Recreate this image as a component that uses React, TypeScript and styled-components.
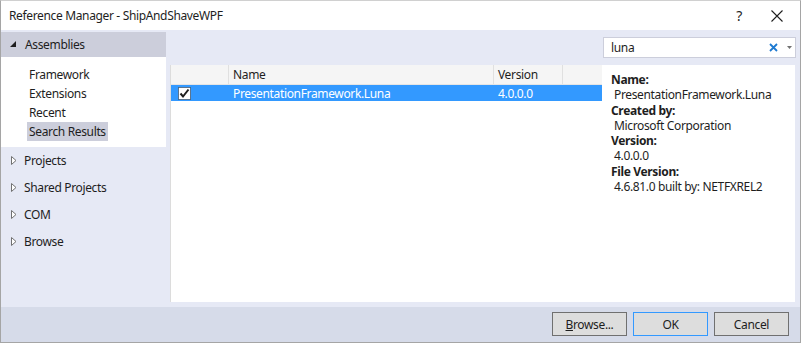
import React from "react";
import styled, { createGlobalStyle } from "styled-components";

const GlobalStyle = createGlobalStyle`
  html, body { margin: 0; padding: 0; background: #ffffff; }
  body { font-family: "Noto Sans", "Open Sans", sans-serif; font-size: 12px; letter-spacing: -0.35px; color: #1e1e1e; }
  * { box-sizing: border-box; }
`;

const Window = styled.div`
  width: 801px;
  height: 343px;
  display: flex;
  flex-direction: column;
  border: 1px solid #a5a5a5;
  border-top-color: #d0d0d0;
  background: #e6e9f5;
  overflow: hidden;
`;

const TitleBar = styled.div`
  height: 29px;
  flex: 0 0 auto;
  background: #ffffff;
  display: flex;
  align-items: center;
  padding-left: 8px;
`;

const Title = styled.div`
  flex: 1;
  font-size: 12px;
  color: #1e1e1e;
`;

const TitleButton = styled.div<{ $w: number }>`
  width: ${(p) => p.$w}px;
  height: 29px;
  display: flex;
  align-items: center;
  justify-content: center;
  color: #1e1e1e;
`;

const HelpGlyph = styled.span`
  font-size: 14px;
`;

const Main = styled.div`
  flex: 1;
  display: flex;
  padding-top: 2px;
  min-height: 0;
`;

const LeftPanel = styled.div`
  width: 165px;
  flex: 0 0 auto;
  display: flex;
  flex-direction: column;
`;

const GroupHeader = styled.div`
  height: 25px;
  background: #cccedb;
  display: flex;
  align-items: center;
  padding-left: 9px;
  gap: 8px;
`;

const SubList = styled.div`
  background: #ffffff;
  padding: 8px 0 6px 26px;
  display: flex;
  flex-direction: column;
  width: 165px;
`;

const SubItem = styled.div<{ $selected?: boolean }>`
  height: 19px;
  display: flex;
  align-items: center;
  align-self: flex-start;
  padding: 0 2px;
  background: ${(p) => (p.$selected ? "#cccedb" : "transparent")};
`;

const NavItem = styled.div`
  height: 27px;
  display: flex;
  align-items: center;
  padding-left: 10px;
  gap: 7px;
`;

const RightArea = styled.div`
  flex: 1;
  display: flex;
  flex-direction: column;
  padding: 5px 5px 5px 4px;
  min-width: 0;
`;

const SearchRow = styled.div`
  height: 21px;
  display: flex;
  justify-content: flex-end;
  margin-bottom: 7px;
`;

const SearchBox = styled.div`
  width: 193px;
  height: 21px;
  margin-right: -1px;
  background: #ffffff;
  border: 1px solid #cccedb;
  display: flex;
  align-items: center;
  padding-left: 7px;
`;

const SearchText = styled.div`
  flex: 1;
  color: #1e1e1e;
`;

const SearchClear = styled.div`
  width: 14px;
  display: flex;
  align-items: center;
  justify-content: center;
  margin-right: 4px;
`;

const SearchDrop = styled.div`
  width: 11px;
  display: flex;
  align-items: center;
  justify-content: center;
`;

const Content = styled.div`
  flex: 1;
  display: flex;
  min-height: 0;
`;

const Grid = styled.div`
  width: 432px;
  flex: 0 0 auto;
  background: #ffffff;
  border-left: 1px solid #dcdcdc;
  display: flex;
  flex-direction: column;
`;

const HeaderRow = styled.div`
  height: 20px;
  display: flex;
  background: #f5f5f5;
  border-bottom: 1px solid #e5e5e5;
`;

const HeaderCell = styled.div<{ $w: number }>`
  width: ${(p) => p.$w}px;
  flex: 0 0 auto;
  border-right: 1px solid #e0e0e0;
  display: flex;
  align-items: center;
  padding-left: 4px;
`;

const HeaderFill = styled.div`
  flex: 1;
`;

const DataRow = styled.div<{ $selected?: boolean }>`
  height: 16px;
  display: flex;
  background: ${(p) => (p.$selected ? "#3399ff" : "transparent")};
  color: ${(p) => (p.$selected ? "#ffffff" : "#1e1e1e")};
`;

const DataCell = styled.div<{ $w: number }>`
  width: ${(p) => p.$w}px;
  flex: 0 0 auto;
  display: flex;
  align-items: center;
  padding-left: 4px;
`;

const CheckCell = styled.div<{ $w: number }>`
  width: ${(p) => p.$w}px;
  flex: 0 0 auto;
  display: flex;
  align-items: center;
  padding-left: 7px;
`;

const Details = styled.div`
  flex: 1;
  background: #ffffff;
  padding: 7px 0 0 9px;
  display: flex;
  flex-direction: column;
`;

const DetailLabel = styled.div`
  font-weight: 700;
  line-height: 15.3px;
`;

const DetailValue = styled.div`
  line-height: 15.3px;
  padding-left: 3px;
`;

const BottomBar = styled.div`
  height: 35px;
  flex: 0 0 auto;
  background: #d6dbe9;
  display: flex;
  justify-content: flex-end;
  align-items: flex-start;
  padding: 5px 11px 0 0;
  gap: 6px;
`;

const Button = styled.div<{ $focused?: boolean }>`
  width: 75px;
  height: 24px;
  background: #dddddd;
  border: 1px solid ${(p) => (p.$focused ? "#3399ff" : "#707070")};
  display: flex;
  align-items: center;
  justify-content: center;
  color: #1e1e1e;
`;

const Underline = styled.span`
  text-decoration: underline;
`;

const ExpandedArrow = () => (
  <svg width="7" height="7" viewBox="0 0 7 7">
    <path d="M6 0 L6 6 L0 6 Z" fill="#1e1e1e" />
  </svg>
);

const CollapsedArrow = () => (
  <svg width="6" height="9" viewBox="0 0 6 9">
    <path d="M0.5 0.5 L5 4.5 L0.5 8.5 Z" fill="#ffffff" stroke="#717171" strokeWidth="1" />
  </svg>
);

const CheckBox = () => (
  <svg width="13" height="13" viewBox="0 0 13 13">
    <rect x="0.5" y="0.5" width="12" height="12" fill="#ffffff" stroke="#1e1e1e" strokeDasharray="1 1" />
    <path d="M2.5 6.5 L5 9.5 L10.5 2.5" fill="none" stroke="#1e1e1e" strokeWidth="2" />
  </svg>
);

const navItems = ["Projects", "Shared Projects", "COM", "Browse"];

export default function App() {
  return (
    <>
      <GlobalStyle />
      <Window>
        <TitleBar>
          <Title>Reference Manager - ShipAndShaveWPF</Title>
          <TitleButton $w={30}>
            <HelpGlyph>?</HelpGlyph>
          </TitleButton>
          <TitleButton $w={46}>
            <svg width="12" height="12" viewBox="0 0 12 12">
              <path d="M0.5 0.5 L11.5 11.5 M11.5 0.5 L0.5 11.5" stroke="#1e1e1e" strokeWidth="1.1" />
            </svg>
          </TitleButton>
        </TitleBar>
        <Main>
          <LeftPanel>
            <GroupHeader>
              <ExpandedArrow />
              <span>Assemblies</span>
            </GroupHeader>
            <SubList>
              <SubItem>Framework</SubItem>
              <SubItem>Extensions</SubItem>
              <SubItem>Recent</SubItem>
              <SubItem $selected>Search Results</SubItem>
            </SubList>
            {navItems.map((n) => (
              <NavItem key={n}>
                <CollapsedArrow />
                <span>{n}</span>
              </NavItem>
            ))}
          </LeftPanel>
          <RightArea>
            <SearchRow>
              <SearchBox>
                <SearchText>luna</SearchText>
                <SearchClear>
                  <svg width="9" height="9" viewBox="0 0 9 9">
                    <path d="M1 1 L8 8 M8 1 L1 8" stroke="#1e7ad1" strokeWidth="1.8" />
                  </svg>
                </SearchClear>
                <SearchDrop>
                  <svg width="5" height="3" viewBox="0 0 5 3">
                    <path d="M0 0 L5 0 L2.5 3 Z" fill="#717171" />
                  </svg>
                </SearchDrop>
              </SearchBox>
            </SearchRow>
            <Content>
              <Grid>
                <HeaderRow>
                  <HeaderCell $w={58} />
                  <HeaderCell $w={265}>Name</HeaderCell>
                  <HeaderCell $w={69}>Version</HeaderCell>
                  <HeaderFill />
                </HeaderRow>
                <DataRow $selected>
                  <CheckCell $w={58}>
                    <CheckBox />
                  </CheckCell>
                  <DataCell $w={265}>PresentationFramework.Luna</DataCell>
                  <DataCell $w={69}>4.0.0.0</DataCell>
                </DataRow>
              </Grid>
              <Details>
                <DetailLabel>Name:</DetailLabel>
                <DetailValue>PresentationFramework.Luna</DetailValue>
                <DetailLabel>Created by:</DetailLabel>
                <DetailValue>Microsoft Corporation</DetailValue>
                <DetailLabel>Version:</DetailLabel>
                <DetailValue>4.0.0.0</DetailValue>
                <DetailLabel>File Version:</DetailLabel>
                <DetailValue>4.6.81.0 built by: NETFXREL2</DetailValue>
              </Details>
            </Content>
          </RightArea>
        </Main>
        <BottomBar>
          <Button>
            <span>
              <Underline>B</Underline>rowse...
            </span>
          </Button>
          <Button $focused>OK</Button>
          <Button>Cancel</Button>
        </BottomBar>
      </Window>
    </>
  );
}
